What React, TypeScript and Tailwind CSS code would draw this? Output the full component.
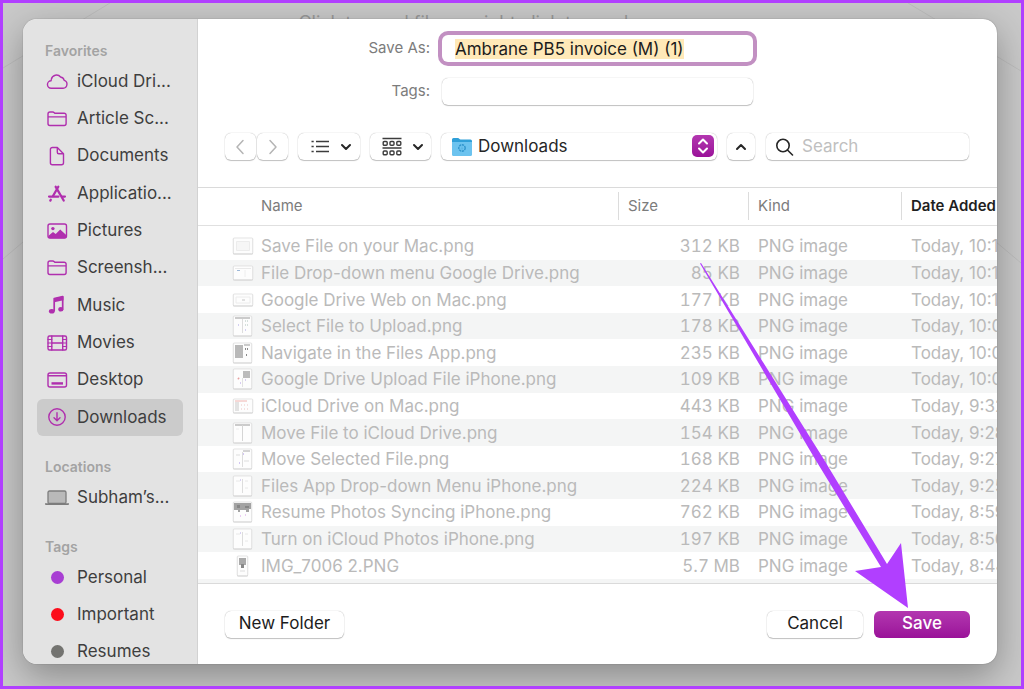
import { useEffect, useRef, type ReactNode } from "react";

interface FileRow {
  name: string;
  size: string;
  date: string;
  thumb: Thumb;
}

type Thumb =
  | "wide"
  | "browser"
  | "strip"
  | "split"
  | "darkLeft"
  | "darkRight"
  | "redTop"
  | "pages"
  | "corner"
  | "lines"
  | "photos"
  | "phone";

const files: FileRow[] = [
  { name: "Save File on your Mac.png", size: "312 KB", date: "Today, 10:1", thumb: "wide" },
  { name: "File Drop-down menu Google Drive.png", size: "85 KB", date: "Today, 10:1", thumb: "browser" },
  { name: "Google Drive Web on Mac.png", size: "177 KB", date: "Today, 10:1", thumb: "strip" },
  { name: "Select File to Upload.png", size: "178 KB", date: "Today, 10:0", thumb: "split" },
  { name: "Navigate in the Files App.png", size: "235 KB", date: "Today, 10:0", thumb: "darkLeft" },
  { name: "Google Drive Upload File iPhone.png", size: "109 KB", date: "Today, 10:0", thumb: "darkRight" },
  { name: "iCloud Drive on Mac.png", size: "443 KB", date: "Today, 9:32", thumb: "redTop" },
  { name: "Move File to iCloud Drive.png", size: "154 KB", date: "Today, 9:28", thumb: "pages" },
  { name: "Move Selected File.png", size: "168 KB", date: "Today, 9:27", thumb: "corner" },
  { name: "Files App Drop-down Menu iPhone.png", size: "224 KB", date: "Today, 9:25", thumb: "lines" },
  { name: "Resume Photos Syncing iPhone.png", size: "762 KB", date: "Today, 8:59", thumb: "photos" },
  { name: "Turn on iCloud Photos iPhone.png", size: "197 KB", date: "Today, 8:56", thumb: "lines" },
  { name: "IMG_7006 2.PNG", size: "5.7 MB", date: "Today, 8:44", thumb: "phone" },
];

const Glyph = ({ children }: { children: ReactNode }) => (
  <svg
    viewBox="0 0 24 22"
    className="h-[22px] w-6 shrink-0"
    fill="none"
    stroke="#b02fae"
    strokeWidth="1.4"
    strokeLinecap="round"
    strokeLinejoin="round"
    aria-hidden="true"
  >
    {children}
  </svg>
);

const CloudIcon = () => (
  <Glyph>
    <path d="M6.2 17.2h11.9a4 4 0 0 0 1.1-7.8A4.3 4.3 0 0 0 15.6 6a5.3 5.3 0 0 0-9.3 2.4 5 5 0 0 0-.2 1.4 3.7 3.7 0 0 0 .1 7.4Z" />
  </Glyph>
);

const FolderIcon = () => (
  <Glyph>
    <path d="M3 6a2 2 0 0 1 2-2h2.7c.7 0 1.1.2 1.6.7l.5.5h9.4a1.9 1.9 0 0 1 1.9 1.9v8.5a1.9 1.9 0 0 1-1.9 1.9H4.9A1.9 1.9 0 0 1 3 15.6ZM3 8.9h18" />
  </Glyph>
);

const DocumentIcon = () => (
  <Glyph>
    <path d="M7.4 2.5h4.9l6.2 6.3v8.9a2 2 0 0 1-2 2H7.4a2 2 0 0 1-2-2V4.5a2 2 0 0 1 2-2ZM12.3 2.7v4.6a1.5 1.5 0 0 0 1.5 1.5h4.5" />
  </Glyph>
);

const AppsIcon = () => (
  <Glyph>
    <path strokeWidth="2.3" d="M13.3 3.8 8 13M10.7 3.8l8 13.7M5.8 16.7l-.5.9" />
    <path strokeWidth="2.1" d="M4 13.6h9.5M17.3 13.6H20" />
  </Glyph>
);

const PicturesIcon = () => (
  <Glyph>
    <rect x="3" y="4" width="18.5" height="14" rx="2" />
    <circle cx="7.9" cy="8.6" r="1.7" fill="#b02fae" stroke="none" />
    <path
      fill="#b02fae"
      stroke="none"
      d="M3.5 15.7 8 11.9l2.7 2.2 4.5-4.6 6 5.5v2a1.5 1.5 0 0 1-1.5 1.2H5A1.5 1.5 0 0 1 3.500 17Z"
    />
  </Glyph>
);

const MusicIcon = () => (
  <Glyph>
    <path strokeWidth="1.7" d="M9.2 16.5V4.6l8.5-1.9v11.6" />
    <path fill="#b02fae" stroke="none" d="M9.2 4.2 18.5 2.3v4L9.2 8.2Z" />
    <ellipse cx="6.8" cy="17.3" rx="2.9" ry="2.3" fill="#b02fae" stroke="none" />
    <ellipse cx="15.9" cy="15.3" rx="2.6" ry="2.3" fill="#b02fae" stroke="none" />
  </Glyph>
);

const MoviesIcon = () => (
  <Glyph>
    <rect x="3" y="4" width="18.5" height="14" rx="1.5" />
    <path d="M6.8 4v14M17.7 4v14M6.8 11h10.9" />
    <path strokeWidth="1.2" d="M3 7.5h3.8M3 11h3.8M3 14.5h3.8M17.7 7.5h3.8M17.7 11h3.8M17.7 14.5h3.8" />
  </Glyph>
);

const DesktopIcon = () => (
  <Glyph>
    <rect x="3" y="4" width="18.5" height="14" rx="2" />
    <path d="M3.5 6.8h17.5" />
    <path strokeWidth="2.4" strokeLinecap="butt" d="M6.5 14.4h11.5" />
  </Glyph>
);

const DownloadsIcon = () => (
  <Glyph>
    <circle cx="12" cy="11" r="8.2" />
    <path d="M12 6.8v7.6M9 11.8l3 3 3-3" />
  </Glyph>
);

const LaptopIcon = () => (
  <svg viewBox="0 0 24 22" className="h-[22px] w-6 shrink-0" aria-hidden="true">
    <rect x="3" y="4" width="18" height="12.5" rx="1.5" fill="#b9b9b9" stroke="#7d7d7d" strokeWidth="1.3" />
    <path d="M0 16.2h24v.8a1 1 0 0 1-1 1H1a1 1 0 0 1-1-1Z" fill="#7d7d7d" />
  </svg>
);

const favorites = [
  { label: "iCloud Dri...", icon: <CloudIcon /> },
  { label: "Article Sc...", icon: <FolderIcon /> },
  { label: "Documents", icon: <DocumentIcon /> },
  { label: "Applicatio...", icon: <AppsIcon /> },
  { label: "Pictures", icon: <PicturesIcon /> },
  { label: "Screensh...", icon: <FolderIcon /> },
  { label: "Music", icon: <MusicIcon /> },
  { label: "Movies", icon: <MoviesIcon /> },
  { label: "Desktop", icon: <DesktopIcon /> },
  { label: "Downloads", icon: <DownloadsIcon />, active: true },
];

const tags = [
  { label: "Personal", dot: "bg-[#a83fd3]" },
  { label: "Important", dot: "bg-[#fc0d1b]" },
  { label: "Resumes", dot: "bg-[#737370]" },
];

const sheets: Record<Thumb, { x: number; y: number; w: number; h: number; art: ReactNode }> = {
  wide: {
    x: 0, y: 2, w: 20, h: 16,
    art: <path d="M3.5 5.5h13v9h-13Z" fill="#f6f6f6" stroke="#ececec" />,
  },
  browser: {
    x: 0, y: 3, w: 20, h: 14,
    art: <><path d="M2 5h16v1H2Z" fill="#e9e9e9" /><path d="M4 7h3v1H4Z" fill="#9db8d8" /><path d="M12 7v7" stroke="#eee" /></>,
  },
  strip: {
    x: 0, y: 4, w: 20, h: 12,
    art: <><path d="M3 7h14v6H3Z" fill="none" stroke="#ececec" /><path d="M9 10h3" stroke="#c4c4c4" /></>,
  },
  split: {
    x: 0, y: 0, w: 19, h: 20,
    art: <><path d="M2 2h15" stroke="#999" /><path d="M9.5 3v14" stroke="#ddd" /><path d="M12 5h4M12 9h4" stroke="#adc2bb" strokeDasharray="1 1" /><path d="M5 9h1M12 14h1" stroke="#a9a1e6" /></>,
  },
  darkLeft: {
    x: 0, y: 0, w: 19, h: 20,
    art: <><path d="M2 2h8v13H2Z" fill="#b9b9b9" /><path d="M11 2h6" stroke="#999" /><path d="M12 6h4M13 12h1" stroke="#888" strokeWidth="2" strokeDasharray="1 1" /></>,
  },
  darkRight: {
    x: 0, y: 0, w: 19, h: 20,
    art: <><path d="M10 2h7v7h-7Z" fill="#bcbcbc" /><path d="M5 9l1 1" stroke="#e7a0a0" strokeWidth="2" /><path d="M7 14h1M12 11h1" stroke="#b49be8" /><path d="M9.5 9v9" stroke="#e2e2e2" /></>,
  },
  redTop: {
    x: 0, y: 3, w: 20, h: 14,
    art: <><path d="M2 5h12" stroke="#f0b4b0" /><path d="M2 6h4v9H2Z" fill="#e3e3e3" /><path d="M8 9h9M8 13h9" stroke="#edc5c2" strokeDasharray="1 2" /></>,
  },
  pages: {
    x: 0, y: 0, w: 19, h: 20,
    art: <><path d="M2 2h15" stroke="#999" /><path d="M9.5 2v16" stroke="#d5d5d5" /><path d="M3 6h3" stroke="#eee" /></>,
  },
  corner: {
    x: 0, y: 0, w: 19, h: 20,
    art: <><path d="M10 2h7" stroke="#aaa" /><path d="M9.5 3v15M3 6h4M11 12h5" stroke="#ddd" /><path d="M10 5h1M6 14h1" stroke="#a78ee8" /></>,
  },
  lines: {
    x: 0, y: 0, w: 19, h: 20,
    art: <><path d="M9.5 3v14" stroke="#ddd" /><path d="M3 5h4M12 5h3M12 12h3" stroke="#e8e8e8" /><path d="M7 4h1" stroke="#b5a6ea" /></>,
  },
  photos: {
    x: 0, y: 0, w: 19, h: 20,
    art: <><path d="M1 1h17v6h-2v3h-3V8H7v2H5V8H1Z" fill="#a3a3a3" /><path d="M4 3h3v3H4ZM12 4h4v2h-4Z" fill="#868686" /><path d="M7 14h1M12 13h1" stroke="#d79be8" /></>,
  },
  phone: {
    x: 4, y: 0, w: 11, h: 20,
    art: <><path d="M6 2h7v7H6Z" fill="#aaa" /><path d="M8 8h3v4H8Z" fill="#888" /><path d="M7 15h5" stroke="#ddd" /></>,
  },
};

const FileThumb = ({ kind }: { kind: Thumb }) => {
  const { x, y, w, h, art } = sheets[kind];
  return (
    <svg viewBox="-1 -1 22 22" className="h-[22px] w-[22px] shrink-0" aria-hidden="true">
      <rect x={x} y={y + 0.6} width={w} height={h} rx="1" fill="#cfcfcf" />
      <rect x={x + 0.2} y={y} width={w - 0.4} height={h - 0.3} rx="1" fill="#fdfdfd" stroke="#d9d9d9" strokeWidth="0.7" />
      {art}
    </svg>
  );
};

const Chevron = ({ d, className }: { d: string; className: string }) => (
  <svg
    viewBox="0 0 12 12"
    className={className}
    fill="none"
    stroke="currentColor"
    strokeWidth="2"
    strokeLinecap="round"
    strokeLinejoin="round"
    aria-hidden="true"
  >
    <path d={d} />
  </svg>
);

const control =
  "flex h-[27px] items-center justify-center rounded-md bg-white shadow-[0_0_1px_rgba(0,0,0,0.35),0_1px_1px_rgba(0,0,0,0.22)]";

const SidebarHeading = ({ children }: { children: ReactNode }) => (
  <h2 className="px-2 text-sm leading-5 font-semibold text-[#a3a3a3]">{children}</h2>
);

const Sidebar = () => (
  <nav className="w-[175px] shrink-0 overflow-hidden border-r border-[#d2d2d2] bg-[#e3e3e3] px-3.5 pt-[22px] text-[17px] text-[#3e3e3e]">
    <SidebarHeading>Favorites</SidebarHeading>
    <ul className="mt-0.5 grid h-[373px] auto-rows-fr">
      {favorites.map((item) => (
        <li key={item.label} className="grid">
          <a
            href="#"
            className={`flex items-center gap-2 rounded-md pl-2 ${item.active ? "bg-[#cbcbcb]" : ""}`}
          >
            {item.icon}
            {item.label}
          </a>
        </li>
      ))}
    </ul>
    <div className="mt-[21px]">
      <SidebarHeading>Locations</SidebarHeading>
      <a href="#" className="mt-0.5 flex h-[37px] items-center gap-2 pl-2">
        <LaptopIcon />
        Subham’s...
      </a>
    </div>
    <div className="mt-[21px]">
      <SidebarHeading>Tags</SidebarHeading>
      <ul className="mt-0.5">
        {tags.map((tag) => (
          <li key={tag.label}>
            <a href="#" className="flex h-[37px] items-center gap-2 pl-2">
              <span className="flex w-6 justify-center">
                <span className={`size-[13px] rounded-full ${tag.dot}`} />
              </span>
              {tag.label}
            </a>
          </li>
        ))}
      </ul>
    </div>
  </nav>
);

const NameFields = () => {
  const nameRef = useRef<HTMLInputElement>(null);

  useEffect(() => {
    nameRef.current?.focus();
    nameRef.current?.select();
  }, []);

  return (
    <div className="grid grid-cols-[232px_311px] items-center gap-x-3 gap-y-4 pt-4">
      <label htmlFor="save-as" className="text-right text-[15px] text-[#7c7c7c]">
        Save As:
      </label>
      <input
        ref={nameRef}
        id="save-as"
        type="text"
        defaultValue="Ambrane PB5 invoice (M) (1)"
        className="h-[27px] rounded-md bg-white px-[13px] text-[17px] leading-[23px] text-[#1c1c1c] ring-4 ring-[#c290c2] outline-none selection:bg-[#ffe9b8] selection:text-[#1c1c1c]"
      />
      <label htmlFor="tags" className="text-right text-[15px] text-[#7c7c7c]">
        Tags:
      </label>
      <input
        id="tags"
        type="text"
        className="h-[27px] rounded-md bg-white px-3 shadow-[0_0_1px_rgba(0,0,0,0.35),0_1px_1px_rgba(0,0,0,0.22)] outline-none"
      />
    </div>
  );
};

const Toolbar = () => (
  <div className="mt-7 flex items-center pr-7 pl-[27px] text-[#262626]">
    <button type="button" aria-label="Back" className={`${control} mr-px w-[31px] text-[#b5b5b5]`}>
      <svg viewBox="0 0 12 18" className="h-[18px] w-3" fill="none" stroke="currentColor" strokeWidth="1.5" strokeLinecap="round" strokeLinejoin="round">
        <path d="M8 2.5 2 9l6 6.5" />
      </svg>
    </button>
    <button type="button" aria-label="Forward" className={`${control} w-[31px] text-[#b5b5b5]`}>
      <svg viewBox="0 0 12 18" className="h-[18px] w-3" fill="none" stroke="currentColor" strokeWidth="1.5" strokeLinecap="round" strokeLinejoin="round">
        <path d="m3 2.5 6 6.5-6 6.5" />
      </svg>
    </button>
    <button type="button" aria-label="List view" className={`${control} ml-2.5 w-[62px] gap-2.5 pl-1`}>
      <svg viewBox="0 0 20 16" className="h-4 w-5" stroke="#3c3c3c" strokeWidth="1.7" aria-hidden="true">
        <path d="M1.5 2.5h2.2M1.5 7.5h2.2M1.5 12.5h2.2M6 2.5h13M6 7.500h13M6 12.500h13" />
      </svg>
      <Chevron className="size-3" d="m2 4 4 4 4-4" />
    </button>
    <button type="button" aria-label="Group by" className={`${control} ml-2.5 w-[61px] gap-2.5 pl-1`}>
      <svg viewBox="0 0 20 20" className="size-5" fill="none" stroke="#3c3c3c" strokeWidth="1.4" aria-hidden="true">
        <path d="M.5 1.5h19M.5 11h19" />
        <rect x="1.2" y="4.5" width="4" height="3.8" rx="1" />
        <rect x="8" y="4.5" width="4" height="3.8" rx="1" />
        <rect x="14.8" y="4.5" width="4" height="3.8" rx="1" />
        <rect x="1.2" y="14" width="4" height="3.8" rx="1" />
        <rect x="8" y="14" width="4" height="3.8" rx="1" />
        <rect x="14.8" y="14" width="4" height="3.8" rx="1" />
      </svg>
      <Chevron className="size-3" d="m2 4 4 4 4-4" />
    </button>
    <div className="relative ml-2.5 flex-1">
      <select
        aria-label="Folder"
        className="block h-[27px] w-full appearance-none rounded-md bg-white pl-[37px] text-[17px] text-[#262626] shadow-[0_0_1px_rgba(0,0,0,0.35),0_1px_1px_rgba(0,0,0,0.22)] outline-none"
      >
        <option>Downloads</option>
      </select>
      <svg viewBox="0 0 20 20" className="pointer-events-none absolute top-1 left-[11px] size-5" aria-hidden="true">
        <path d="M0 2.5A1.5 1.5 0 0 1 1.5 1H6c1 0 1.500 1.500 2.500 1.500h10A1.500 1.500 0 0 1 20 4v4H0Z" fill="#2f9fd8" />
        <path d="M0 5h20v12.5a1.5 1.5 0 0 1-1.5 1.5h-17A1.5 1.5 0 0 1 0 17.500Z" fill="#6cc3ef" />
        <circle cx="10" cy="11" r="3.2" fill="none" stroke="#2f94cc" strokeWidth="1.4" strokeDasharray="2.2 .7" />
        <path d="M10 9.5v2.8M9 11.3l1 1 1-1" fill="none" stroke="#55b0e0" strokeWidth=".8" />
      </svg>
      <span className="pointer-events-none absolute top-0.5 right-[3px] flex size-[22px] items-center justify-center rounded-[5px] bg-gradient-to-b from-[#b336b0] to-[#9a1199] text-white">
        <svg viewBox="0 0 12 16" className="h-4 w-3" fill="none" stroke="currentColor" strokeWidth="2" strokeLinecap="round" strokeLinejoin="round" aria-hidden="true">
          <path d="m2 5.5 4-4 4 4M2 10.5l4 4 4-4" />
        </svg>
      </span>
    </div>
    <button type="button" aria-label="Collapse" className={`${control} ml-2.5 w-7`}>
      <Chevron className="size-3" d="m2 8 4-4 4 4" />
    </button>
    <label className={`${control} ml-[11px] w-[203px] gap-2 pl-2.5`}>
      <svg viewBox="0 0 18 18" className="size-[18px] shrink-0" fill="none" stroke="#262626" strokeWidth="1.6" strokeLinecap="round" aria-hidden="true">
        <circle cx="7" cy="7.5" r="6.2" />
        <path d="m11.7 12.2 4.8 4.800" />
      </svg>
      <input
        type="text"
        aria-label="Search"
        placeholder="Search"
        className="min-w-0 flex-1 text-[17px] outline-none placeholder:text-[#c0c0c0]"
      />
    </label>
  </div>
);

const HeaderLabel = ({ children }: { children: ReactNode }) => (
  <div className="flex h-7 items-center border-l border-[#dcdcdc] pl-[9px]">{children}</div>
);

const FileTable = () => (
  <div className="mt-[27px] flex min-h-0 flex-1 flex-col overflow-hidden border-y border-[#dadada]">
    <table className="h-[391px] w-full shrink-0 table-fixed border-collapse text-left whitespace-nowrap">
      <colgroup>
        <col />
        <col className="w-[130px]" />
        <col className="w-[153px]" />
        <col className="w-24" />
      </colgroup>
      <thead className="text-[15px] text-[#7c7c7c]">
        <tr className="h-[37px] border-b border-[#e0e0e0]">
          <th className="p-0 pl-[63px] font-normal">Name</th>
          <th className="p-0 font-normal">
            <HeaderLabel>Size</HeaderLabel>
          </th>
          <th className="p-0 font-normal">
            <HeaderLabel>Kind</HeaderLabel>
          </th>
          <th className="p-0 font-semibold text-[#1f1f1f]">
            <HeaderLabel>Date Added</HeaderLabel>
          </th>
        </tr>
        <tr className="h-2" />
      </thead>
      <tbody className="text-[17px] leading-5 text-[#bababa]">
        {files.map((file) => (
          <tr key={file.name} className="even:bg-[#f4f5f5]">
            <td className="p-0 pl-[34px]">
              <div className="flex items-center gap-[7px]">
                <FileThumb kind={file.thumb} />
                {file.name}
              </div>
            </td>
            <td className="p-0 pr-2 text-right tabular-nums">{file.size}</td>
            <td className="p-0 pl-2.5">PNG image</td>
            <td className="p-0 pl-2.5">{file.date}</td>
          </tr>
        ))}
      </tbody>
    </table>
    <div className="flex-1 bg-[#f4f5f5]" />
  </div>
);

const Footer = () => (
  <footer className="flex h-20 shrink-0 items-center gap-[11px] px-[27px] text-[17px] text-[#1c1c1c]">
    <button type="button" className={`${control} mr-auto w-[119px]`}>
      New Folder
    </button>
    <button type="button" className={`${control} w-24`}>
      Cancel
    </button>
    <div className="relative">
      <button
        type="button"
        className="block h-[27px] w-24 rounded-md bg-gradient-to-b from-[#b336b0] to-[#9a1199] font-medium text-white"
      >
        Save
      </button>
      <svg
        viewBox="0 0 209 345"
        className="pointer-events-none absolute right-[61px] bottom-[30px] h-[345px] w-[209px]"
        fill="#b13fff"
        aria-hidden="true"
      >
        <path d="M0 .5 1 0l122 195 64 106 14-21 7 65-53-37 26-4-66-108Z" />
      </svg>
    </div>
  </footer>
);

const Backdrop = () => (
  <>
    <svg
      viewBox="0 0 1018 683"
      preserveAspectRatio="none"
      className="absolute inset-0 h-full w-full"
      fill="none"
      stroke="#bdbdbd"
      aria-hidden="true"
    >
      <path d="M0 65 107 0M0 256 40 222M905 0l113 68M980 228l38 32" />
    </svg>
    <p className="absolute inset-x-0 top-2 text-center text-lg leading-6 text-[#999]">
      Click to send files or right click to send a message
    </p>
  </>
);

const App = () => {
  return (
    <div className="relative flex h-screen overflow-hidden border-[3px] border-[#b13fff] bg-[#c9c9c9] pt-4 pr-6 pb-[22px] pl-5 font-[Inter,sans-serif]">
      <Backdrop />
      <main className="relative flex min-w-0 flex-1 overflow-hidden rounded-[14px] bg-white shadow-[0_0_1px_rgba(0,0,0,0.5),0_12px_36px_rgba(0,0,0,0.32)]">
        <Sidebar />
        <section className="flex min-w-0 flex-1 flex-col">
          <NameFields />
          <Toolbar />
          <FileTable />
          <Footer />
        </section>
      </main>
    </div>
  );
};

export default App;
